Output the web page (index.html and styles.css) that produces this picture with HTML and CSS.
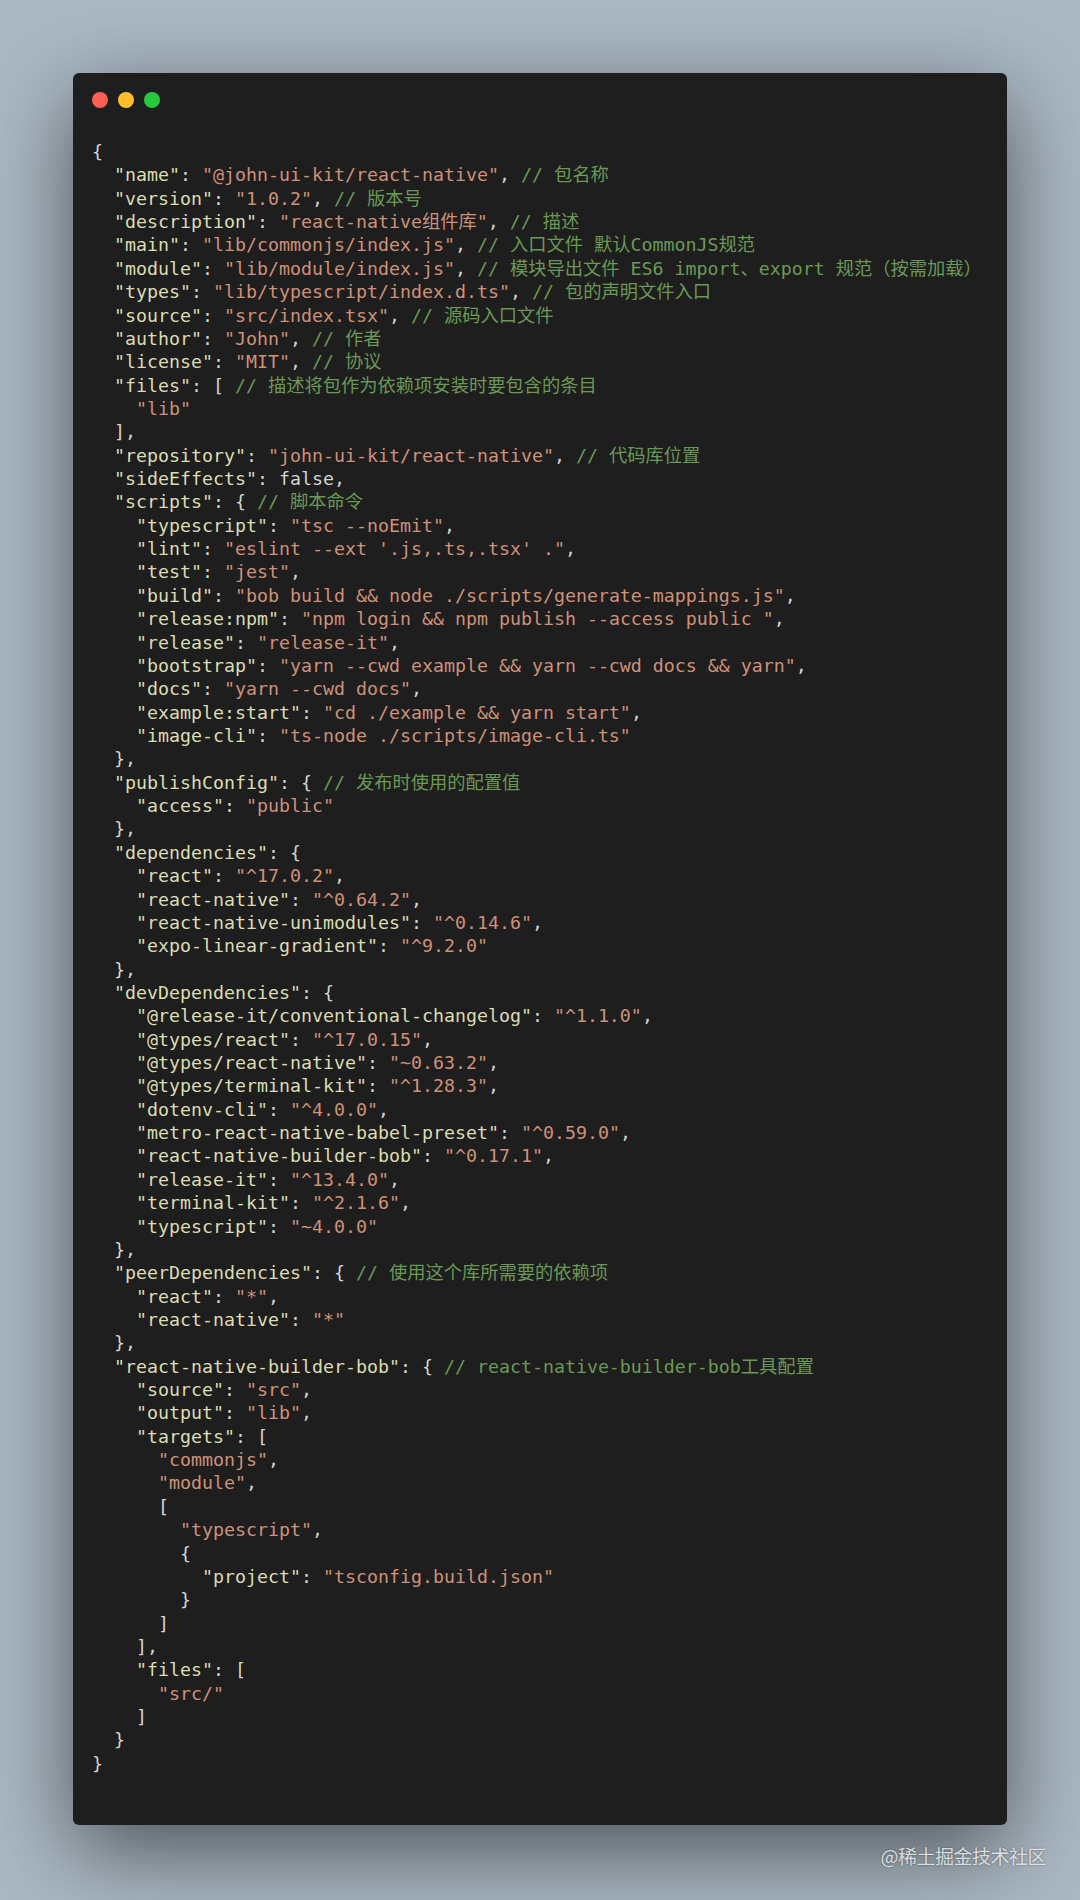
FILE: index.html
```html
<!DOCTYPE html>
<html lang="zh-CN">
<head>
<meta charset="utf-8">
<title>package.json</title>
<link rel="stylesheet" href="styles.css">
</head>
<body>
<div class="window">
  <div class="titlebar">
    <span class="dot red"></span>
    <span class="dot yellow"></span>
    <span class="dot green"></span>
  </div>
  <div class="code">
<div class="ln">{</div>
<div class="ln">  <span class="k">"name"</span>: <span class="s">"@john-ui-kit/react-native"</span>, <span class="c">// 包名称</span></div>
<div class="ln">  <span class="k">"version"</span>: <span class="s">"1.0.2"</span>, <span class="c">// 版本号</span></div>
<div class="ln">  <span class="k">"description"</span>: <span class="s">"react-native组件库"</span>, <span class="c">// 描述</span></div>
<div class="ln">  <span class="k">"main"</span>: <span class="s">"lib/commonjs/index.js"</span>, <span class="c">// 入口文件 默认CommonJS规范</span></div>
<div class="ln">  <span class="k">"module"</span>: <span class="s">"lib/module/index.js"</span>, <span class="c">// 模块导出文件 ES6 import、export 规范（按需加载）</span></div>
<div class="ln">  <span class="k">"types"</span>: <span class="s">"lib/typescript/index.d.ts"</span>, <span class="c">// 包的声明文件入口</span></div>
<div class="ln">  <span class="k">"source"</span>: <span class="s">"src/index.tsx"</span>, <span class="c">// 源码入口文件</span></div>
<div class="ln">  <span class="k">"author"</span>: <span class="s">"John"</span>, <span class="c">// 作者</span></div>
<div class="ln">  <span class="k">"license"</span>: <span class="s">"MIT"</span>, <span class="c">// 协议</span></div>
<div class="ln">  <span class="k">"files"</span>: [ <span class="c">// 描述将包作为依赖项安装时要包含的条目</span></div>
<div class="ln">    <span class="s">"lib"</span></div>
<div class="ln">  ],</div>
<div class="ln">  <span class="k">"repository"</span>: <span class="s">"john-ui-kit/react-native"</span>, <span class="c">// 代码库位置</span></div>
<div class="ln">  <span class="k">"sideEffects"</span>: <span class="b">false</span>,</div>
<div class="ln">  <span class="k">"scripts"</span>: { <span class="c">// 脚本命令</span></div>
<div class="ln">    <span class="k">"typescript"</span>: <span class="s">"tsc --noEmit"</span>,</div>
<div class="ln">    <span class="k">"lint"</span>: <span class="s">"eslint --ext '.js,.ts,.tsx' ."</span>,</div>
<div class="ln">    <span class="k">"test"</span>: <span class="s">"jest"</span>,</div>
<div class="ln">    <span class="k">"build"</span>: <span class="s">"bob build &amp;&amp; node ./scripts/generate-mappings.js"</span>,</div>
<div class="ln">    <span class="k">"release:npm"</span>: <span class="s">"npm login &amp;&amp; npm publish --access public "</span>,</div>
<div class="ln">    <span class="k">"release"</span>: <span class="s">"release-it"</span>,</div>
<div class="ln">    <span class="k">"bootstrap"</span>: <span class="s">"yarn --cwd example &amp;&amp; yarn --cwd docs &amp;&amp; yarn"</span>,</div>
<div class="ln">    <span class="k">"docs"</span>: <span class="s">"yarn --cwd docs"</span>,</div>
<div class="ln">    <span class="k">"example:start"</span>: <span class="s">"cd ./example &amp;&amp; yarn start"</span>,</div>
<div class="ln">    <span class="k">"image-cli"</span>: <span class="s">"ts-node ./scripts/image-cli.ts"</span></div>
<div class="ln">  },</div>
<div class="ln">  <span class="k">"publishConfig"</span>: { <span class="c">// 发布时使用的配置值</span></div>
<div class="ln">    <span class="k">"access"</span>: <span class="s">"public"</span></div>
<div class="ln">  },</div>
<div class="ln">  <span class="k">"dependencies"</span>: {</div>
<div class="ln">    <span class="k">"react"</span>: <span class="s">"^17.0.2"</span>,</div>
<div class="ln">    <span class="k">"react-native"</span>: <span class="s">"^0.64.2"</span>,</div>
<div class="ln">    <span class="k">"react-native-unimodules"</span>: <span class="s">"^0.14.6"</span>,</div>
<div class="ln">    <span class="k">"expo-linear-gradient"</span>: <span class="s">"^9.2.0"</span></div>
<div class="ln">  },</div>
<div class="ln">  <span class="k">"devDependencies"</span>: {</div>
<div class="ln">    <span class="k">"@release-it/conventional-changelog"</span>: <span class="s">"^1.1.0"</span>,</div>
<div class="ln">    <span class="k">"@types/react"</span>: <span class="s">"^17.0.15"</span>,</div>
<div class="ln">    <span class="k">"@types/react-native"</span>: <span class="s">"~0.63.2"</span>,</div>
<div class="ln">    <span class="k">"@types/terminal-kit"</span>: <span class="s">"^1.28.3"</span>,</div>
<div class="ln">    <span class="k">"dotenv-cli"</span>: <span class="s">"^4.0.0"</span>,</div>
<div class="ln">    <span class="k">"metro-react-native-babel-preset"</span>: <span class="s">"^0.59.0"</span>,</div>
<div class="ln">    <span class="k">"react-native-builder-bob"</span>: <span class="s">"^0.17.1"</span>,</div>
<div class="ln">    <span class="k">"release-it"</span>: <span class="s">"^13.4.0"</span>,</div>
<div class="ln">    <span class="k">"terminal-kit"</span>: <span class="s">"^2.1.6"</span>,</div>
<div class="ln">    <span class="k">"typescript"</span>: <span class="s">"~4.0.0"</span></div>
<div class="ln">  },</div>
<div class="ln">  <span class="k">"peerDependencies"</span>: { <span class="c">// 使用这个库所需要的依赖项</span></div>
<div class="ln">    <span class="k">"react"</span>: <span class="s">"*"</span>,</div>
<div class="ln">    <span class="k">"react-native"</span>: <span class="s">"*"</span></div>
<div class="ln">  },</div>
<div class="ln">  <span class="k">"react-native-builder-bob"</span>: { <span class="c">// react-native-builder-bob工具配置</span></div>
<div class="ln">    <span class="k">"source"</span>: <span class="s">"src"</span>,</div>
<div class="ln">    <span class="k">"output"</span>: <span class="s">"lib"</span>,</div>
<div class="ln">    <span class="k">"targets"</span>: [</div>
<div class="ln">      <span class="s">"commonjs"</span>,</div>
<div class="ln">      <span class="s">"module"</span>,</div>
<div class="ln">      [</div>
<div class="ln">        <span class="s">"typescript"</span>,</div>
<div class="ln">        {</div>
<div class="ln">          <span class="k">"project"</span>: <span class="s">"tsconfig.build.json"</span></div>
<div class="ln">        }</div>
<div class="ln">      ]</div>
<div class="ln">    ],</div>
<div class="ln">    <span class="k">"files"</span>: [</div>
<div class="ln">      <span class="s">"src/"</span></div>
<div class="ln">    ]</div>
<div class="ln">  }</div>
<div class="ln">}</div>
  </div>
</div>
<div class="watermark">@稀土掘金技术社区</div>
</body>
</html>
```

FILE: styles.css
```css
html, body {
  margin: 0;
  padding: 0;
}

body {
  position: relative;
  width: 1080px;
  height: 1900px;
  overflow: hidden;
  background: #abb8c3;
}

.window {
  box-sizing: border-box;
  margin: 73px 0 0 73px;
  width: 934px;
  height: 1752px;
  padding: 19px 19px 0 19px;
  background: #1e1e1e;
  border-radius: 6px;
  box-shadow: 0 26px 88px rgba(0, 0, 0, 0.55);
}

.titlebar {
  display: flex;
  gap: 10px;
  height: 16px;
}

.dot {
  width: 16px;
  height: 16px;
  border-radius: 50%;
}

.red { background: #ff5f56; }
.yellow { background: #ffbd2e; }
.green { background: #27c93f; }

.code {
  margin-top: 32px;
  font-family: "DejaVu Sans Mono", "Noto Sans CJK SC", monospace;
  font-size: 18.27px;
  color: #d4d4d4;
}

.ln {
  height: 23.37px;
  line-height: 23.37px;
  white-space: pre;
}

.k { color: #dcdcb0; }
.s { color: #ce9178; }
.c { color: #6a9955; }
.b { color: #d4d4d4; }

.watermark {
  position: absolute;
  right: 34px;
  top: 1844px;
  font-family: "Noto Sans CJK SC", sans-serif;
  font-size: 19px;
  line-height: 24px;
  color: rgba(240, 243, 246, 0.85);
  text-shadow: 0 0 2px rgba(0, 0, 0, 0.45);
  letter-spacing: -0.5px;
}
```
